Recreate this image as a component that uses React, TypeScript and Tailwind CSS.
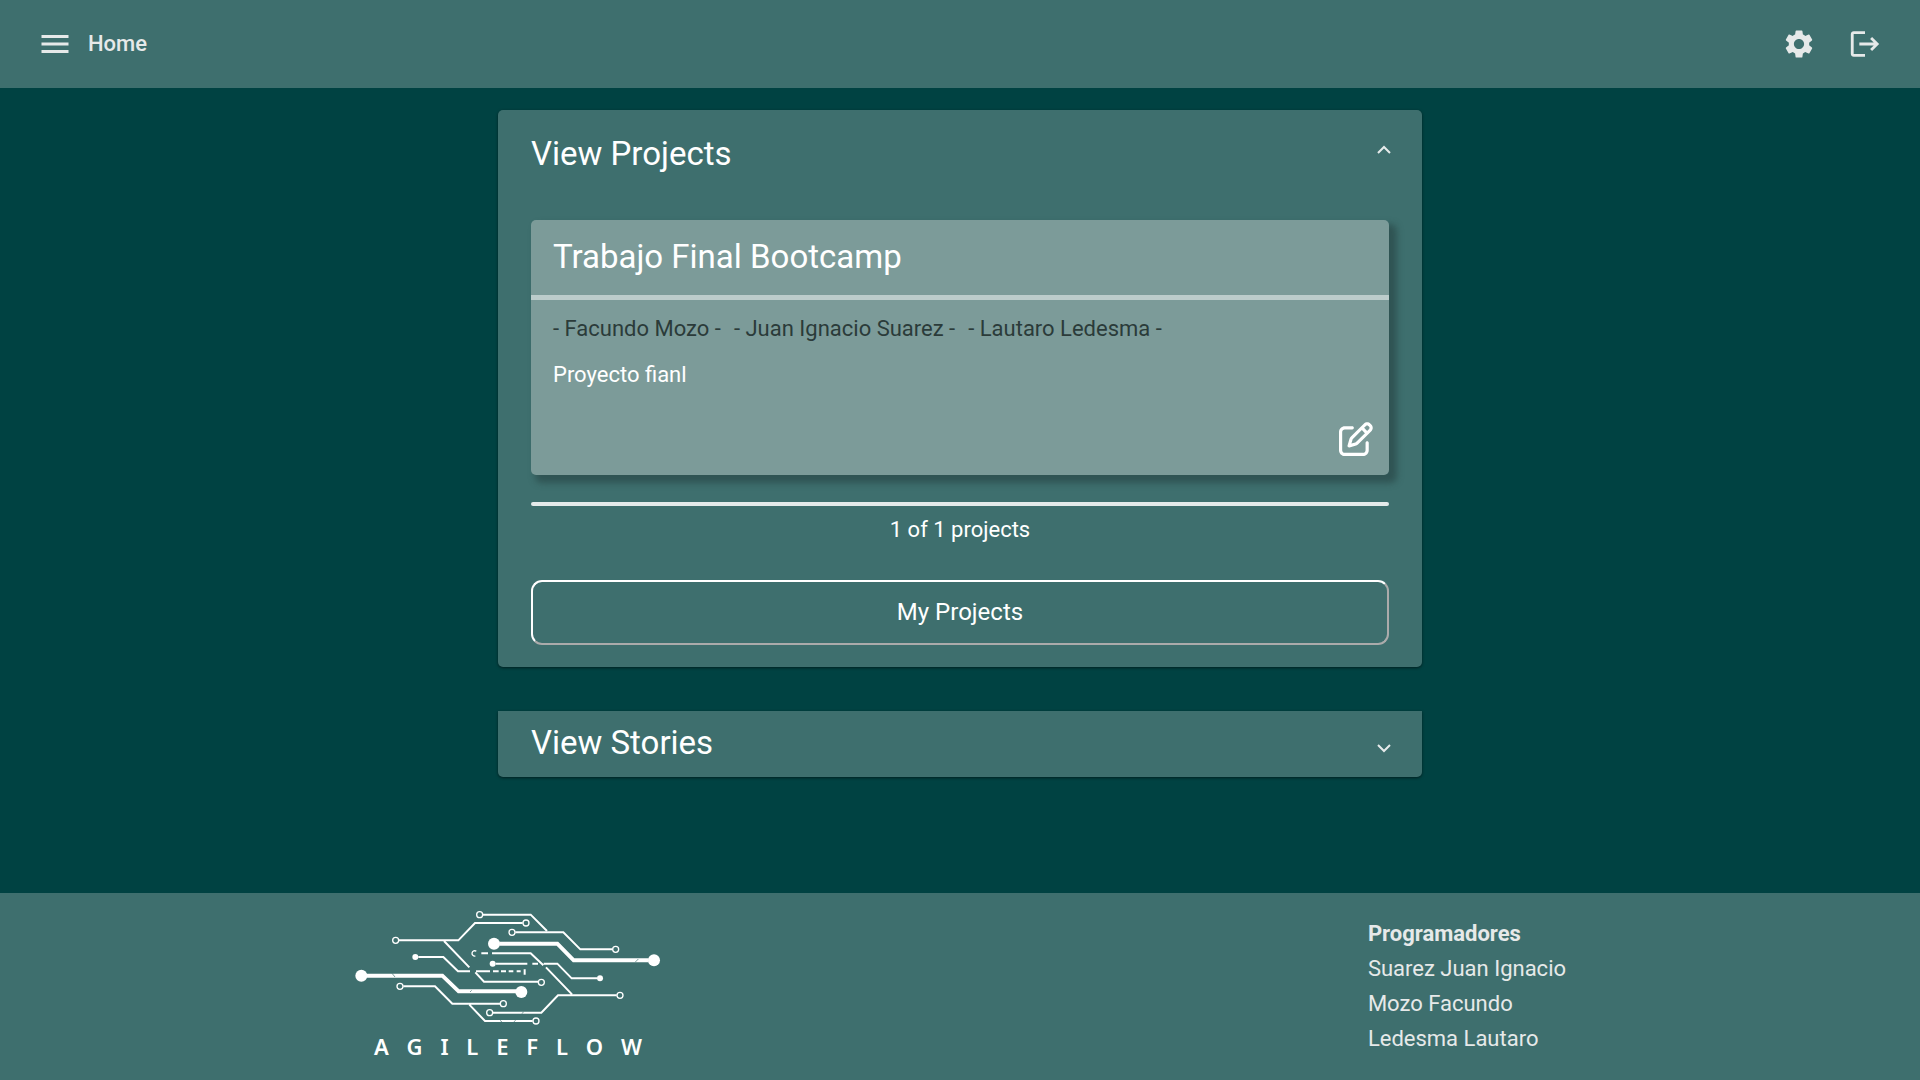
import React from "react";
import { MdLogout, MdMenu, MdSettings } from "react-icons/md";
import { FaRegPenToSquare } from "react-icons/fa6";

const members = ["Facundo Mozo", "Juan Ignacio Suarez", "Lautaro Ledesma"];
const developers = ["Suarez Juan Ignacio", "Mozo Facundo", "Ledesma Lautaro"];

const dots: [number, number, number][] = [
  [60, 257, 18],
  [222, 201, 9],
  [458, 161, 18],
  [454, 221, 9],
  [938, 211, 18],
  [776, 265, 9],
  [540, 306, 18],
];

const rings: [number, number][] = [
  [163, 151],
  [176, 289],
  [415, 74],
  [554, 99],
  [512, 127],
  [823, 178],
  [836, 316],
  [600, 277],
  [486, 341],
  [445, 368],
  [584, 393],
];

function Chevron({ up }: { up?: boolean }) {
  return (
    <svg width="14" height="9" viewBox="0 0 14 9" fill="none" stroke="#e6ebeb" strokeWidth="2" aria-hidden="true">
      <path d={up ? "M1 8L7 2L13 8" : "M1 1L7 7L13 1"} />
    </svg>
  );
}

function Logo() {
  return (
    <div className="flex w-[312px] flex-col items-center">
      <svg viewBox="32 60 936 351" className="w-full" fill="none" stroke="white" strokeWidth="6" aria-hidden="true">
        <path d="M425 74H568L617 123" />
        <path d="M173 151H351L401 99H544" />
        <path d="M308 153L384 232M402 247L428 275H590" />
        <path d="M522 127H666L717 178H813" />
        <path d="M231 201H306L350 244H386M404 244H446M455 244H472M479 244H494M502 244H516M526 244H538M550 238V254" />
        <path d="M186 289H281L333 341H476M384 344L431 393H574" />
        <path d="M455 368H600L650 316H826M420 190H440M452 190H568L606 226M614 232L692 313" />
        <path d="M463 221H558M573 221H590M607 221H648L691 265H768" />
        <path d="M405 184A8 8 0 1 0 402 198" strokeWidth="4" />
        <path d="M76 257H303L352 304H524" strokeWidth="12" />
        <path d="M474 161H648L697 211H922" strokeWidth="12" />
        <path d="M152 250L161 261M386 306L391 301M882 216L891 207M541 371L547 366M476 391L482 396M517 396L523 391" stroke="#3e6f6e" strokeWidth="2" />
        {dots.map(([x, y, r]) => (
          <circle key={`${x}-${y}`} cx={x} cy={y} r={r} fill="white" stroke="none" />
        ))}
        {rings.map(([x, y]) => (
          <circle key={`${x}-${y}`} cx={x} cy={y} r="9" fill="#3e6f6e" strokeWidth="4" />
        ))}
      </svg>
      <div
        className="flex w-[268px] justify-between pt-[3px] font-['Noto_Sans'] text-[22px] leading-8 font-semibold text-white"
        role="img"
        aria-label="AGILEFLOW"
      >
        {"AGILEFLOW".split("").map((c, i) => (
          <span key={i}>{c}</span>
        ))}
      </div>
    </div>
  );
}

export default function App() {
  return (
    <div className="flex min-h-screen flex-col bg-[#004242] font-[Roboto,sans-serif] text-white">
      <header className="flex h-[88px] items-center justify-between bg-[#3e6f6e] pr-[38px] pl-[37px] text-[#e6e9e9]">
        <div className="flex items-center gap-[15px]">
          <button type="button" aria-label="Open menu">
            <MdMenu size={36} />
          </button>
          <span className="text-[22px] leading-8 font-medium">Home</span>
        </div>
        <div className="flex items-center gap-8">
          <button type="button" aria-label="Settings">
            <MdSettings size={34} />
          </button>
          <button type="button" aria-label="Log out">
            <MdLogout size={34} />
          </button>
        </div>
      </header>

      <main className="mx-auto flex w-full max-w-[924px] grow flex-col gap-11 pt-[22px]">
        <section className="rounded-[5px] bg-[#3e6f6e] px-[33px] pb-[22px] shadow-[0_1px_3px_rgba(0,0,0,0.5)]">
          <button type="button" className="flex h-[110px] w-[calc(100%+2px)] items-start justify-between pt-[22px] text-left">
            <h2 className="text-[33px] leading-[44px]">View Projects</h2>
            <span className="flex h-[34px] items-center">
              <Chevron up />
            </span>
          </button>

          <article className="flex h-[255px] flex-col rounded-[5px] bg-[#7c9b99] shadow-[6px_6px_6px_2px_rgba(38,67,67,0.6)]">
            <h3 className="h-[75px] px-[22px] pt-[15px] text-[33px] leading-[44px]">Trabajo Final Bootcamp</h3>
            <div className="h-[5px] shrink-0 bg-[#bccccb]" />
            <p className="flex gap-[13px] px-[22px] pt-[13px] text-[22px] leading-8 text-[#2b3b3a]">
              {members.map((m) => (
                <span key={m}>- {m} -</span>
              ))}
            </p>
            <p className="px-[22px] pt-[14px] text-[22px] leading-8">Proyecto fianl</p>
            <div className="mt-auto flex justify-end pr-4 pb-[19px]">
              <button type="button" aria-label="Edit project">
                <FaRegPenToSquare size={34} />
              </button>
            </div>
          </article>

          <div className="mt-[27px] h-1 rounded-full bg-[#e4eaea]" />
          <p className="pt-2 text-center text-[22px] leading-8">1 of 1 projects</p>
          <button
            type="button"
            className="mt-[34px] h-[65px] w-full rounded-[11px] border-2 border-white pb-[2px] text-[24px] leading-8 [border-style:outset]"
          >
            My Projects
          </button>
        </section>

        <section className="rounded-b-[5px] bg-[#3e6f6e] shadow-[0_1px_3px_rgba(0,0,0,0.5)]">
          <button type="button" className="flex h-[66px] w-full items-center justify-between pr-[31px] pl-[33px] text-left">
            <h2 className="pb-[2px] text-[33px] leading-[44px]">View Stories</h2>
            <span className="pt-2">
              <Chevron />
            </span>
          </button>
        </section>
      </main>

      <footer className="flex h-[187px] items-start justify-around bg-[#3e6f6e] pt-[17px] pr-[2px]">
        <Logo />
        <div className="pt-[6px] text-[22px] leading-[35px] text-[#e6e9e9]">
          <h4 className="font-bold">Programadores</h4>
          <ul>
            {developers.map((d) => (
              <li key={d}>{d}</li>
            ))}
          </ul>
        </div>
      </footer>
    </div>
  );
}
